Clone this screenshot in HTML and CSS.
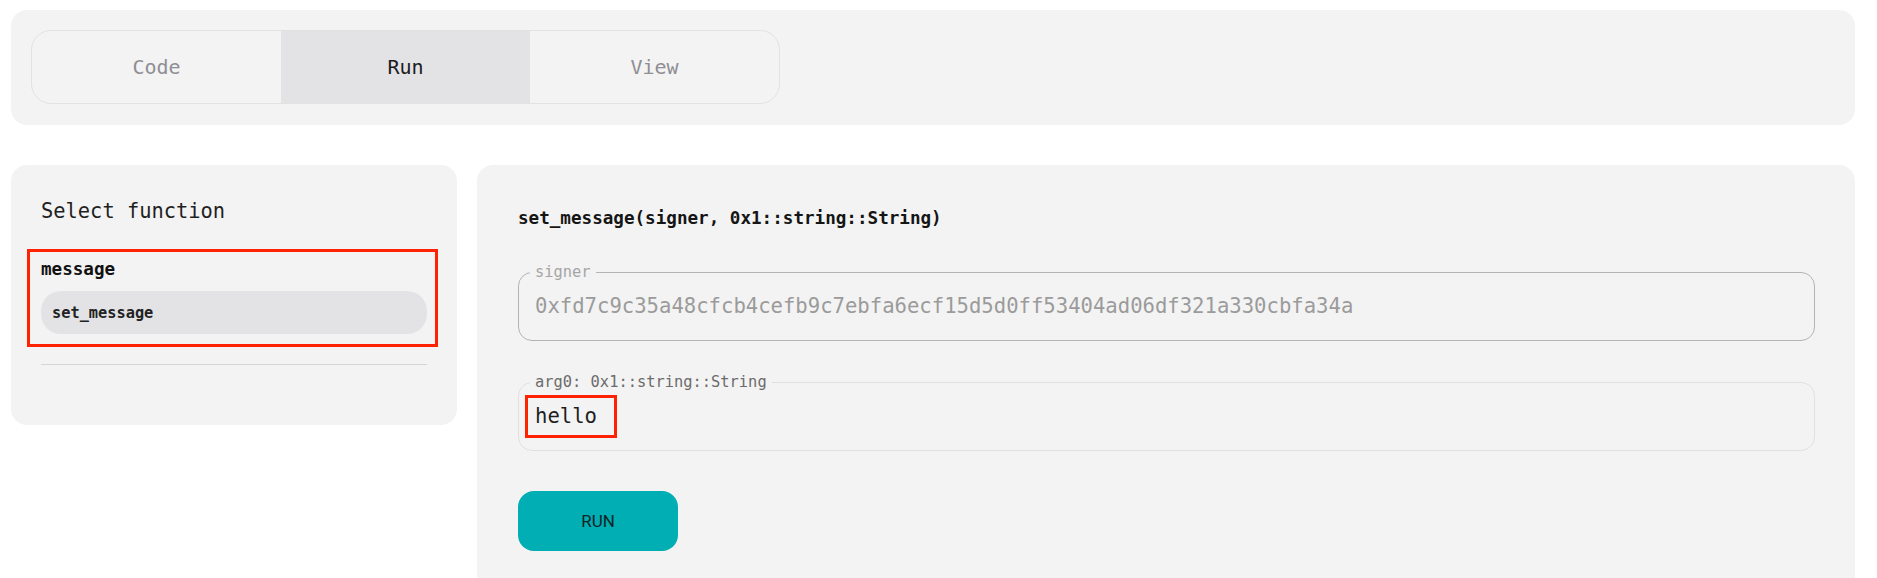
FILE: index.html
```html
<!DOCTYPE html>
<html lang="en">
<head>
<meta charset="utf-8">
<title>Run</title>
<link rel="stylesheet" href="styles.css">
</head>
<body>
<div class="page">
  <header class="topbar">
    <nav class="tabs">
      <div class="tab">Code</div>
      <div class="tab active">Run</div>
      <div class="tab">View</div>
    </nav>
  </header>
  <main class="workspace">
    <aside class="panel sidebar">
      <h2 class="sidebar-title">Select function</h2>
      <div class="module">
        <div class="module-name">message</div>
        <div class="fn-item">set_message</div>
      </div>
      <hr class="divider">
    </aside>
    <section class="panel runner">
      <h3 class="signature">set_message(signer, 0x1::string::String)</h3>
      <fieldset class="field field-disabled">
        <legend>signer</legend>
        <div class="field-value">0xfd7c9c35a48cfcb4cefb9c7ebfa6ecf15d5d0ff53404ad06df321a330cbfa34a</div>
      </fieldset>
      <fieldset class="field field-active">
        <legend>arg0: 0x1::string::String</legend>
        <div class="field-value"><span class="marked">hello</span></div>
      </fieldset>
      <button class="run-btn" type="button">RUN</button>
    </section>
  </main>
</div>
</body>
</html>
```
FILE: styles.css
```css
* { box-sizing: border-box; }

body {
  margin: 0;
  background: #ffffff;
  font-family: "DejaVu Sans Mono", "Liberation Mono", monospace;
  color: #1f1f1f;
}

.page {
  padding: 10px 22px 0 11px;
  display: flex;
  flex-direction: column;
  gap: 40px;
}

.topbar {
  background: #f3f3f3;
  border-radius: 16px;
  padding: 20px 20px 21px;
}

.tabs {
  width: 749px;
  height: 74px;
  display: grid;
  grid-template-columns: 1fr 1fr 1fr;
  border: 1px solid #e2e2e2;
  border-radius: 20px;
  overflow: hidden;
}

.tab {
  display: flex;
  align-items: center;
  justify-content: center;
  font-size: 20px;
  color: #8e8e93;
}

.tab.active {
  background: #e3e3e5;
  color: #1c1c1e;
}

.workspace {
  display: grid;
  grid-template-columns: 446px 1fr;
  gap: 20px;
  align-items: start;
}

.panel {
  background: #f3f3f3;
  border-radius: 16px;
}

.sidebar {
  padding: 34px 30px 60px;
}

.sidebar-title {
  margin: 0;
  font-size: 20.4px;
  font-weight: 400;
  line-height: 24px;
  color: #1f1f1f;
}

.module {
  margin: 26px -11px 0 -14px;
  border: 3px solid #ff2200;
  padding: 5px 8px 10px 11px;
}

.module-name {
  font-size: 17.6px;
  font-weight: 700;
  line-height: 24px;
  color: #111111;
}

.fn-item {
  margin-top: 10px;
  height: 43px;
  border-radius: 20px;
  background: #e3e3e5;
  display: flex;
  align-items: center;
  padding-left: 11px;
  font-size: 15.3px;
  font-weight: 700;
  color: #222222;
}

.divider {
  margin: 17px 0 0;
  border: 0;
  border-top: 1px solid #d6d6d6;
  height: 0;
}

.runner {
  padding: 41px 40px 41px 41px;
}

.signature {
  margin: 0;
  font-size: 17.6px;
  font-weight: 700;
  line-height: 24px;
  color: #151515;
}

.field {
  margin: 33px 0 0;
  padding: 0;
  border: 1px solid #b4b4b4;
  border-radius: 14px;
  min-inline-size: 0;
}

.field legend {
  margin-left: 11px;
  padding: 0 5px;
  font-size: 15.4px;
  line-height: 18px;
  color: #a5a5a5;
}

.field-value {
  height: 59px;
  padding: 13px 16px 0;
  font-size: 20.6px;
  line-height: 24px;
  color: #9b9b9b;
  white-space: nowrap;
  display: flex;
  align-items: flex-start;
}

.field-active {
  margin-top: 32px;
  border-color: #e0e0e0;
}

.field-active legend {
  color: #6b6b6b;
}

.field-active .field-value {
  padding: 4px 6px 0;
  color: #1e1e1e;
}

.marked {
  display: inline-block;
  border: 3px solid #ff2200;
  padding: 6px 17px 7px 7px;
}

.run-btn {
  display: flex;
  align-items: center;
  justify-content: center;
  margin-top: 40px;
  width: 160px;
  height: 60px;
  border: 0;
  border-radius: 16px;
  background: #00aeb3;
  font-family: Roboto, "Noto Sans", sans-serif;
  font-size: 17px;
  color: #102426;
  padding: 0;
}
```
